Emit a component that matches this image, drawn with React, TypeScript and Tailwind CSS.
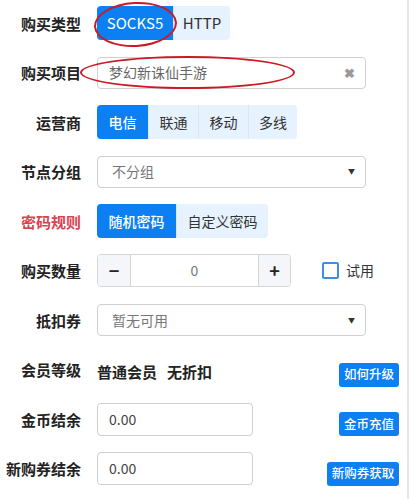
import { useState } from "react";

const font = { fontFamily: '"Noto Sans CJK SC", "Liberation Sans", sans-serif' };

const Label = ({ text, red }: { text: string; red?: boolean }) => (
  <div
    className={`w-[81px] shrink-0 text-right text-[15px] font-bold leading-none ${
      red ? "text-[#d9434f]" : "text-[#222]"
    }`}
  >
    {text}
  </div>
);

const Segment = ({
  items,
  active,
  onPick,
  widths,
  latin,
}: {
  items: string[];
  active: number;
  onPick: (i: number) => void;
  widths: string[];
  latin?: boolean;
}) => (
  <div className="flex h-[34px] overflow-hidden rounded-[4px]">
    {items.map((item, i) => (
      <button
        key={item}
        onClick={() => onPick(i)}
        className={`${widths[i]} h-full ${latin ? "text-[15px]" : "text-[14px]"} ${
          i === active
            ? `bg-[#0c7ff2] text-white ${latin ? "font-normal" : "font-medium"}`
            : "bg-[#e6f2fe] text-[#333]"
        } ${i > 0 && i !== active ? "border-l border-[#d7e7f8]" : ""}`}
      >
        {item}
      </button>
    ))}
  </div>
);

const SelectBox = ({ text }: { text: string }) => (
  <div className="flex h-[32px] w-[269px] items-center justify-between rounded-[4px] border border-[#d0d0d0] bg-white pl-[14px] pr-[10px]">
    <span className="text-[14px] text-[#777]">{text}</span>
    <span className="text-[7px] text-[#333]">▼</span>
  </div>
);

const SmallButton = ({ text, w }: { text: string; w: string }) => (
  <button
    className={`${w} h-[24px] self-end rounded-[3px] bg-[#0c7ff2] text-[12.5px] font-medium text-white`}
  >
    {text}
  </button>
);

export default function App() {
  const [proto, setProto] = useState(0);
  const [isp, setIsp] = useState(0);
  const [pwd, setPwd] = useState(0);
  const [qty, setQty] = useState(0);
  const [trial, setTrial] = useState(false);

  return (
    <div className="h-[499px] w-[411px] bg-white" style={font}>
      <div className="relative h-full w-[409px] border-r-2 border-[#e6e6e6]">
        <div className="flex flex-col gap-[15.5px] pt-[6px] pr-[8px]">
          <div className="flex h-[34px] items-center gap-[16px]">
            <Label text="购买类型" />
            <Segment
              items={["SOCKS5", "HTTP"]}
              active={proto}
              onPick={setProto}
              widths={["w-[76px]", "w-[57px]"]}
              latin
            />
          </div>

          <div className="flex h-[34px] items-center gap-[16px]">
            <Label text="购买项目" />
            <div className="flex h-[32px] w-[269px] items-center justify-between rounded-[4px] border border-[#d0d0d0] bg-white pl-[11px] pr-[10px]">
              <span className="text-[14px] text-[#666]">梦幻新诛仙手游</span>
              <span className="text-[13px] font-bold text-[#999]">✖</span>
            </div>
          </div>

          <div className="flex h-[34px] items-center gap-[16px]">
            <Label text="运营商" />
            <Segment
              items={["电信", "联通", "移动", "多线"]}
              active={isp}
              onPick={setIsp}
              widths={["w-[51px]", "w-[50px]", "w-[50px]", "w-[49px]"]}
            />
          </div>

          <div className="flex h-[34px] items-center gap-[16px]">
            <Label text="节点分组" />
            <SelectBox text="不分组" />
          </div>

          <div className="flex h-[34px] items-center gap-[16px]">
            <Label text="密码规则" red />
            <Segment
              items={["随机密码", "自定义密码"]}
              active={pwd}
              onPick={setPwd}
              widths={["w-[79px]", "w-[92px]"]}
            />
          </div>

          <div className="flex h-[34px] items-center gap-[16px]">
            <Label text="购买数量" />
            <div className="flex h-[33px] w-[194px] overflow-hidden rounded-[4px] border border-[#d6d6d6]">
              <button
                onClick={() => setQty(Math.max(0, qty - 1))}
                className="w-[33px] border-r border-[#d6d6d6] bg-[#f4f6f9] text-[18px] font-bold text-[#222]"
              >
                −
              </button>
              <div className="flex flex-1 items-center justify-center bg-white text-[14px] text-[#777]">
                {qty}
              </div>
              <button
                onClick={() => setQty(qty + 1)}
                className="w-[32px] border-l border-[#d6d6d6] bg-[#f4f6f9] text-[18px] font-bold text-[#222]"
              >
                +
              </button>
            </div>
            <label className="ml-[15px] flex items-center gap-[7px]">
              <input
                type="checkbox"
                checked={trial}
                onChange={() => setTrial(!trial)}
                className="h-[17px] w-[17px] appearance-none rounded-[2px] border-2 border-[#3d8fe0] bg-white checked:bg-[#3d8fe0]"
              />
              <span className="text-[14px] text-[#333]">试用</span>
            </label>
          </div>

          <div className="flex h-[34px] items-center gap-[16px]">
            <Label text="抵扣券" />
            <SelectBox text="暂无可用" />
          </div>

          <div className="flex h-[34px] items-center gap-[16px]">
            <Label text="会员等级" />
            <div className="flex flex-1 items-center pt-[5px] text-[15px] font-bold text-[#222]">
              <span>普通会员</span>
              <span className="ml-[10px]">无折扣</span>
            </div>
            <SmallButton text="如何升级" w="w-[60px]" />
          </div>

          <div className="flex h-[34px] items-center gap-[16px]">
            <Label text="金币结余" />
            <div className="flex flex-1 items-center">
              <div className="flex h-[33px] w-[156px] items-center rounded-[4px] border border-[#d0d0d0] bg-white pl-[11px] text-[14px] text-[#444]">
                0.00
              </div>
            </div>
            <SmallButton text="金币充值" w="w-[60px]" />
          </div>

          <div className="flex h-[34px] items-center gap-[16px]">
            <Label text="新购券结余" />
            <div className="flex flex-1 items-center">
              <div className="flex h-[33px] w-[156px] items-center rounded-[4px] border border-[#d0d0d0] bg-white pl-[11px] text-[14px] text-[#444]">
                0.00
              </div>
            </div>
            <SmallButton text="新购券获取" w="w-[72px]" />
          </div>
        </div>

        <div className="pointer-events-none absolute left-[94px] top-[2px] h-[45px] w-[83px] -rotate-3 rounded-[50%] border-[2.5px] border-[#c81b24]" />
        <div className="pointer-events-none absolute left-[80px] top-[56px] h-[33px] w-[215px] rounded-[50%] border-[2.5px] border-[#c81b24]" />
      </div>
    </div>
  );
}
